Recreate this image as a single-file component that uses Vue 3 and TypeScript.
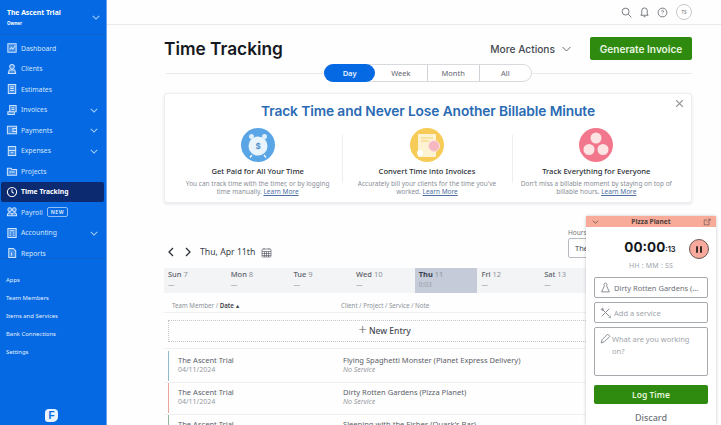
<script setup lang="ts">
interface NavItem { label: string; icon: string; chevron?: boolean; active?: boolean; badge?: string }
const nav: NavItem[] = [
  { label: 'Dashboard', icon: 'M2 2h9v9H2z M4 8l2-2 1.5 1.5L10 4' },
  { label: 'Clients', icon: 'M6.5 1.5a2.5 2.5 0 1 1 0 5 2.5 2.5 0 0 1 0-5z M3.5 7.5h6l1 4h-8z' },
  { label: 'Estimates', icon: 'M2.5 1.5h8v10h-8z M4.5 4h4 M4.5 6h4 M4.5 8h4' },
  { label: 'Invoices', icon: 'M4 1.5h7v7H4z M2 8.5h7v3H2z M6 4h3 M6 6h3', chevron: true },
  { label: 'Payments', icon: 'M1.5 2.5h10v8h-10z M7.5 5h4v3h-4z', chevron: true },
  { label: 'Expenses', icon: 'M2.5 1.5h8v10h-8z M2.5 6h8 M5 8.5h3', chevron: true },
  { label: 'Projects', icon: 'M1.5 3.5h4l1 1.5h5v6h-10z M3.5 7.5h6' },
  { label: 'Time Tracking', icon: 'M6.5 1.5a5 5 0 1 1 0 10 5 5 0 0 1 0-10z M6.5 3.5v3l2 1.5', active: true },
  { label: 'Payroll', icon: 'M4 2a2 2 0 1 1 0 4 2 2 0 0 1 0-4z M9 2a2 2 0 1 1 0 4 2 2 0 0 1 0-4z M1.5 10.5c0-4 4-4 5-1.5 1-2.500 5-2.500 5 1.500z', badge: 'NEW' },
  { label: 'Accounting', icon: 'M2 1.500h9v10H2z M4 4h5 M4 6.500h1.500 M7.500 6.500H9 M4 9h1.500 M7.500 9H9', chevron: true },
  { label: 'Reports', icon: 'M3 1.500h5l2.500 2.500v7.500H3z M6 6v3.500' },
]
const lower = ['Apps', 'Team Members', 'Items and Services', 'Bank Connections', 'Settings']
const tabs = ['Day', 'Week', 'Month', 'All']
const days = [
  { name: 'Sun', num: 7, total: '—' },
  { name: 'Mon', num: 8, total: '—' },
  { name: 'Tue', num: 9, total: '—' },
  { name: 'Wed', num: 10, total: '—' },
  { name: 'Thu', num: 11, total: '0:03', active: true },
  { name: 'Fri', num: 12, total: '—' },
  { name: 'Sat', num: 13, total: '—' },
]
const features = [
  { title: 'Get Paid for All Your Time', text: 'You can track time with the timer, or by logging time manually.', kind: 'clock' },
  { title: 'Convert Time into Invoices', text: "Accurately bill your clients for the time you've worked.", kind: 'doc' },
  { title: 'Track Everything for Everyone', text: "Don't miss a billable moment by staying on top of billable hours.", kind: 'team' },
]
const rows = [
  { who: 'The Ascent Trial', date: '04/11/2024', what: 'Flying Spaghetti Monster (Planet Express Delivery)', color: '#8fb8c9' },
  { who: 'The Ascent Trial', date: '04/11/2024', what: 'Dirty Rotten Gardens (Pizza Planet)', color: '#eba596' },
  { who: 'The Ascent Trial', date: '04/11/2024', what: 'Sleeping with the Fishes (Quark\'s Bar)', color: '#8fb89f' },
]
</script>

<template>
  <div class="app">
    <aside class="side">
      <div class="owner">
        <div>
          <div class="owner-name">The Ascent Trial</div>
          <div class="owner-role">Owner</div>
        </div>
        <svg class="chev" viewBox="0 0 10 6"><path d="M1 1l4 4 4-4" /></svg>
      </div>
      <nav class="nav">
        <div v-for="n in nav" :key="n.label" class="nav-item" :class="{ active: n.active }">
          <svg class="nav-ico" viewBox="0 0 13 13"><path :d="n.icon" /></svg>
          <span>{{ n.label }}</span>
          <span v-if="n.badge" class="badge">{{ n.badge }}</span>
          <svg v-if="n.chevron" class="chev item-chev" viewBox="0 0 10 6"><path d="M1 1l4 4 4-4" /></svg>
        </div>
      </nav>
      <div class="lower">
        <div v-for="l in lower" :key="l" class="lower-item">{{ l }}</div>
      </div>
      <div class="logo"><span>F</span></div>
    </aside>

    <main class="main">
      <header class="top">
        <svg class="top-ico" viewBox="0 0 12 12"><circle cx="5" cy="5" r="3.800" /><path d="M8 8l3.300 3.300" /></svg>
        <svg class="top-ico" viewBox="0 0 12 12"><path d="M6 1a3 3 0 0 1 3 3v3.500l1 1.500H2l1-1.500V4a3 3 0 0 1 3-3z M5 10.500h2" /></svg>
        <svg class="top-ico" viewBox="0 0 12 12"><circle cx="6" cy="6" r="4.800" /><path d="M4.800 4.800a1.200 1.200 0 1 1 1.800 1.100c-.4.2-.6.5-.6.900 M6 8.500v.3" /></svg>
        <div class="avatar">TS</div>
      </header>

      <div class="content">
        <div class="title-row">
          <h1>Time Tracking</h1>
          <div class="more">More Actions
            <svg viewBox="0 0 10 6"><path d="M1 1l4 4 4-4" /></svg>
          </div>
          <button class="generate">Generate Invoice</button>
        </div>

        <div class="tabs-wrap">
          <div class="tabs">
            <div v-for="(t, i) in tabs" :key="t" class="tab" :class="{ on: i === 0, sep: i === 1 || i === 2 }">{{ t }}</div>
          </div>
        </div>

        <section class="banner">
          <svg class="close" viewBox="0 0 8 8"><path d="M1 1l6 6M7 1L1 7" /></svg>
          <h2>Track Time and Never Lose Another Billable Minute</h2>
          <div class="features">
            <div v-for="f in features" :key="f.kind" class="feature">
              <svg class="feat-ico" viewBox="0 0 34 34">
                <template v-if="f.kind === 'clock'">
                  <circle cx="17" cy="17" r="17" fill="#5aa5e6" />
                  <circle cx="10.500" cy="8.500" r="2.500" fill="#dfeefb" />
                  <circle cx="23.500" cy="8.500" r="2.500" fill="#dfeefb" />
                  <path d="M11 27l-2 2.500M23 27l2 2.500" stroke="#eaf4fc" stroke-width="1.500" />
                  <circle cx="17" cy="18" r="9.500" fill="#eaf4fc" />
                  <text x="17" y="21" text-anchor="middle" class="dollar">$</text>
                </template>
                <template v-else-if="f.kind === 'doc'">
                  <circle cx="17" cy="17" r="17" fill="#f7cb58" />
                  <rect x="8" y="6" width="18" height="23" fill="#fdf3d2" />
                  <path d="M11 10h12M11 13h8" stroke="#f7dc8e" stroke-width="1.500" />
                  <circle cx="24" cy="18" r="5.500" fill="#f6b7c0" stroke="#fbe3e2" />
                  <circle cx="10" cy="25" r="3" fill="#fff" />
                </template>
                <template v-else>
                  <circle cx="17" cy="17" r="17" fill="#f2778c" />
                  <circle cx="17" cy="10" r="5.500" fill="#fde4e4" />
                  <circle cx="10" cy="21.500" r="5.500" fill="#fde4e4" />
                  <circle cx="24" cy="21.500" r="5.500" fill="#fde4e4" />
                </template>
              </svg>
              <h3>{{ f.title }}</h3>
              <p>{{ f.text }} <a>Learn More</a></p>
            </div>
          </div>
        </section>

        <div class="date-row">
          <svg class="arrow" viewBox="0 0 6 10"><path d="M5 1L1 5l4 4" /></svg>
          <svg class="arrow next" viewBox="0 0 6 10"><path d="M1 1l4 4-4 4" /></svg>
          <span class="date">Thu, Apr 11th</span>
          <svg class="cal" viewBox="0 0 11 11"><rect x="1" y="2" width="9" height="8" rx="1" /><path d="M1 4.500h9M1 6.500h9M1 8.500h9M3.500 4.500V10M5.500 4.500V10M7.500 4.500V10M3 1v1.500M8 1v1.500" /></svg>
          <div class="hours">
            <div class="hours-label">Hours</div>
            <div class="hours-box">The Ascent Trial</div>
          </div>
        </div>

        <div class="week">
          <div v-for="d in days" :key="d.name" class="day" :class="{ on: d.active }">
            <div><b>{{ d.name }}</b> {{ d.num }}</div>
            <div class="total">{{ d.total }}</div>
          </div>
        </div>

        <div class="thead">
          <div class="c1">Team Member / <b>Date ▴</b></div>
          <div>Client / Project / Service / Note</div>
        </div>

        <div class="new-entry"><span class="plus">+</span> New Entry</div>

        <div class="rows">
          <div v-for="(r, i) in rows" :key="i" class="row">
            <div class="cell" :style="{ borderLeftColor: r.color }">
              <div class="who">{{ r.who }}</div>
              <div class="sub">{{ r.date }}</div>
            </div>
            <div class="cell-2">
              <div class="who">{{ r.what }}</div>
              <div class="sub"><i>No Service</i></div>
            </div>
          </div>
        </div>
      </div>
    </main>

    <aside class="timer">
      <div class="timer-head">
        <svg class="th-chev" viewBox="0 0 10 6"><path d="M1 1l4 4 4-4" /></svg>
        <span>Pizza Planet</span>
        <svg class="th-open" viewBox="0 0 10 10"><path d="M1.500 2.500h4M1.500 2.500v6h6v-4M5 5.500L9 1.500M6.500 1.500H9V4" /></svg>
      </div>
      <div class="timer-body">
        <div class="clock-row">
          <div class="clock">00:00<small>:13</small></div>
          <button class="pause"><i></i><i></i></button>
        </div>
        <div class="hms">HH : MM : SS</div>
        <div class="field">
          <svg viewBox="0 0 10 10"><path d="M5 1a1.500 1.500 0 0 1 1 2.500L8.500 9h-7L4 3.500A1.500 1.500 0 0 1 5 1z" /></svg>
          <span class="dark">Dirty Rotten Gardens (...</span>
        </div>
        <div class="field">
          <svg viewBox="0 0 10 10"><path d="M1.500 1.500l7 7M8.500 1.500l-7 7M2 1a1 1 0 1 1-1 1M8 9a1 1 0 1 0 1-1" /></svg>
          <span>Add a service</span>
        </div>
        <div class="field area">
          <svg viewBox="0 0 10 10"><path d="M1 9l1-3 5-5 2 2-5 5z" /></svg>
          <span>What are you working on?</span>
        </div>
        <button class="log">Log Time</button>
        <div class="discard">Discard</div>
      </div>
    </aside>
  </div>
</template>

<style>
html, body { margin: 0; overflow: hidden; background: #fff; }
</style>

<style scoped>
.app {
  position: relative;
  display: flex;
  width: 721px;
  height: 425px;
  overflow: hidden;
  font-family: "Noto Sans", "Liberation Sans", sans-serif;
  color: #3a3f48;
  background: #fefefe;
}
.side {
  position: relative;
  flex: 0 0 107px;
  height: 425px;
  background: #0469e2;
  color: #e4f0ff;
  border-right: 1px solid #5da2ee;
  box-sizing: border-box;
}
.owner {
  height: 35px;
  display: flex;
  align-items: center;
  justify-content: space-between;
  padding: 0 6px 0 7px;
  box-sizing: border-box;
  border-bottom: 1px solid #0f62c9;
}
.owner-name { font-size: 6.800px; font-weight: 700; color: #fff; line-height: 9px; margin-top: 1px; }
.owner-role { font-size: 4.500px; font-weight: 700; color: #fff; line-height: 8px; margin-top: 2px; }
.chev { width: 8px; height: 5px; fill: none; stroke: #a8d0fb; stroke-width: 1.300; }
.nav { padding: 3px 2px 3px 1px; border-bottom: 1px solid #0f62c9; height: 224px; box-sizing: border-box; }
.nav-item {
  height: 20.500px;
  display: flex;
  align-items: center;
  padding-left: 5px;
  font-size: 6.800px;
  color: #d5e6fc;
  position: relative;
}
.nav-ico { width: 12px; height: 12px; margin-right: 3px; fill: rgba(255,255,255,.25); stroke: #cfe4fd; stroke-width: 1.100; flex: none; }
.item-chev { position: absolute; right: 6px; top: 8px; }
.nav-item.active { background: #0b2a70; border-radius: 2px; color: #fff; font-weight: 700; }
.nav-item.active .nav-ico { fill: none; stroke: #fff; }
.badge {
  margin-left: 4px;
  border: 1px solid #8cbdf5;
  border-radius: 2px;
  font-size: 5px;
  font-weight: 700;
  letter-spacing: .6px;
  padding: 1px 3px;
  line-height: 6px;
}
.lower { padding-top: 12px; }
.lower-item { height: 18px; line-height: 18px; padding-left: 6px; font-size: 5.900px; color: #e4f0ff; }
.logo {
  position: absolute;
  left: 45px;
  bottom: 3px;
  width: 13px;
  height: 13px;
  background: #eaf4ff;
  border-radius: 4px 4px 5px 3px;
  display: flex;
  align-items: center;
  justify-content: center;
  color: #0469e2;
  font: 800 10px "Liberation Sans", sans-serif;
}
.main { flex: 1; min-width: 0; display: flex; flex-direction: column; }
.top {
  flex: none;
  height: 25px;
  box-sizing: border-box;
  border-bottom: 1px solid #e9eaec;
  display: flex;
  align-items: center;
  justify-content: flex-end;
  padding-right: 29px;
  gap: 7px;
}
.top-ico { width: 11px; height: 11px; fill: none; stroke: #6d7178; stroke-width: 1; }
.avatar {
  width: 16px;
  height: 16px;
  border: 1px solid #c7c9cc;
  border-radius: 50%;
  box-sizing: border-box;
  font-size: 4.500px;
  text-align: center;
  line-height: 14px;
  color: #666;
  margin-left: 1px;
}
.content { padding: 0 29px 0 57px; flex: none; }
.title-row { display: flex; align-items: center; height: 23px; margin-top: 12px; }
h1 { margin: 0; font: 600 17.300px Inter, sans-serif; color: #15191f; flex: 1; }
.more { font: 500 10.200px Inter, sans-serif; color: #454a52; display: flex; align-items: center; gap: 6px; margin-right: 18px; }
.more svg { width: 11px; height: 6px; fill: none; stroke: #6a6f75; stroke-width: 1; }
.generate {
  width: 102px;
  height: 23px;
  border: 0;
  border-radius: 2px;
  background: #2f8a10;
  color: #e9f7e0;
  font: 600 10.100px Inter, sans-serif;
  padding: 0;
}
.tabs-wrap {
  position: relative;
  height: 18px;
  margin-top: 4px;
  margin-left: 2px;
  display: flex;
  justify-content: center;
  background: linear-gradient(#e9eaec, #e9eaec) center / 100% 1px no-repeat;
}
.tabs {
  display: flex;
  width: 208px;
  height: 18px;
  margin-left: -2px;
  border: 1px solid #d8dade;
  border-radius: 9px;
  box-sizing: border-box;
  background: #fff;
}
.tab { width: 51px; text-align: center; font-size: 7.500px; line-height: 16px; color: #5f6570; flex: 1; }
.tab.on { background: #0469e2; color: #e8f2ff; border-radius: 9px; font-weight: 600; margin: -1px 0 -1px -1px; line-height: 18px; }
.tab.sep { border-right: 1px solid #cfd2d6; }
.banner {
  position: relative;
  margin-top: 11px;
  height: 110px;
  box-sizing: border-box;
  border: 1px solid #eceef1;
  border-radius: 3px;
  box-shadow: 0 1px 3px rgba(40,50,70,.12);
  background: #fff;
}
.close { position: absolute; right: 7px; top: 5px; width: 9px; height: 9px; fill: none; stroke: #8f959b; stroke-width: 1.100; }
h2 {
  margin: 0;
  padding-top: 8px;
  text-align: center;
  font: 600 13.750px/18px Inter, sans-serif;
  color: #2a6bb3;
  letter-spacing: -.1px;
}
.features { display: flex; margin: 8px 10px 0 8px; }
.feature {
  flex: 1;
  text-align: center;
  display: flex;
  flex-direction: column;
  align-items: center;
  min-width: 0;
  position: relative;
}
.feature + .feature::before {
  content: "";
  position: absolute;
  left: 0;
  top: 7px;
  height: 48px;
  width: 1px;
  background: #eceef1;
}
.feat-ico { width: 34px; height: 34px; }
.dollar { font: 700 8px Inter, sans-serif; fill: #4e8fc8; }
h3 { margin: 4px 0 0; font: 500 7.600px/11px "Noto Sans", sans-serif; color: #2a2e35; white-space: nowrap; }
.feature p { margin: 3px 0 0; font-size: 6.500px; line-height: 8px; color: #8a8f98; width: 152px; }
.feature a { color: #4f6f9f; text-decoration: underline; }
.date-row { display: flex; align-items: center; height: 34px; margin-top: 32px; position: relative; }
.arrow { width: 6px; height: 10px; fill: none; stroke: #2c3037; stroke-width: 1.300; margin-left: 4px; }
.arrow.next { margin-left: 11px; }
.date { margin-left: 9px; font-size: 8.700px; color: #3a3f48; }
.cal { margin-left: 6px; width: 11px; height: 11px; fill: none; stroke: #5e636b; stroke-width: .7; }
.hours { position: absolute; left: 404px; top: -6px; }
.hours-label { font-size: 6.500px; color: #777; line-height: 8px; }
.hours-box {
  width: 110px;
  height: 20px;
  margin-top: 1px;
  box-sizing: border-box;
  border: 1px solid #b8bcc2;
  border-radius: 2px;
  font-size: 7.500px;
  line-height: 18px;
  padding-left: 6px;
}
.week { display: flex; background: #f3f4f6; height: 25px; margin-top: -1px; }
.day { width: 62.700px; flex: none; box-sizing: border-box; padding: 2px 0 0 4px; font-size: 7.500px; line-height: 9px; color: #8d929a; }
.day b { font-weight: 500; color: #5b606a; }
.day.on { background: #c5cbd9; }
.day.on b { font-weight: 700; color: #39404d; }
.total { font-size: 6.500px; line-height: 10px; margin-top: 1px; color: #9aa0a8; }
.thead {
  display: flex;
  height: 20px;
  padding-top: 6px;
  box-sizing: border-box;
  align-items: center;
  font-size: 6.200px;
  color: #8d929a;
  border-bottom: 1px solid #eff0f2;
}
.thead b { color: #3e434c; font-weight: 600; }
.c1 { width: 177px; padding-left: 8px; box-sizing: border-box; }
.new-entry {
  margin: 7px 0 0 4px;
  height: 22px;
  box-sizing: border-box;
  border: 1px dotted #c3c6ca;
  text-align: center;
  font: 500 8.500px/19px "Noto Sans", sans-serif;
  color: #454a52;
  padding-right: 91px;
}
.plus { font-size: 15px; font-weight: 300; line-height: 15px; vertical-align: -1px; color: #666; }
.rows { margin-top: 6px; border-top: 1px solid #eff0f2; padding-top: 2px; }
.row { display: flex; height: 32px; border-bottom: 1px solid #eff0f2; box-sizing: border-box; }
.cell { border-left: 1px solid; margin: 0 0 1px 4px; padding: 4px 0 0 9px; width: 175px; box-sizing: border-box; }
.cell-2 { padding-top: 4px; }
.who { font-size: 7.550px; line-height: 10px; color: #5c616a; }
.sub { font-size: 7px; line-height: 10px; color: #969aa1; }
.timer {
  position: absolute;
  left: 586px;
  top: 216px;
  width: 130px;
  height: 209px;
  background: #fff;
  box-shadow: 0 0 3px rgba(30,40,60,.3);
  border-radius: 2px 2px 0 0;
}
.timer-head {
  height: 11px;
  background: #f9ab9a;
  display: flex;
  align-items: center;
  justify-content: center;
  font-size: 6.600px;
  font-weight: 700;
  color: #4f3f3b;
  position: relative;
}
.th-chev { position: absolute; left: 6px; top: 4px; width: 7px; height: 4px; fill: none; stroke: #5b4540; stroke-width: 1.100; }
.th-open { position: absolute; right: 5px; top: 2px; width: 8px; height: 8px; fill: none; stroke: #6b5650; stroke-width: .9; }
.timer-body { padding: 0 8px; }
.clock-row { position: relative; height: 28px; padding-top: 10px; display: flex; justify-content: center; }
.clock { font: 700 13.500px/20px Inter, sans-serif; color: #16191e; margin-right: 2px; }
.clock small { font-size: 7.500px; font-weight: 600; }
.pause {
  position: absolute;
  right: -1px;
  top: 12px;
  width: 20px;
  height: 20px;
  border: 1px solid #6a5753;
  border-radius: 50%;
  background: #f6a99c;
  display: flex;
  align-items: center;
  justify-content: center;
  gap: 2px;
  padding: 0;
}
.pause i { width: 2px; height: 7px; background: #3a2c29; border-radius: 1px; }
.hms { text-align: center; font-size: 7px; color: #a3a7ad; line-height: 10px; margin-top: -4px; margin-bottom: 6px; letter-spacing: .2px; }
.field {
  height: 21px;
  margin-bottom: 4px;
  border: 1px solid #a6a9ae;
  border-radius: 2px;
  box-sizing: border-box;
  display: flex;
  align-items: center;
  font-size: 7.500px;
  color: #a0a4aa;
  padding-left: 5px;
  gap: 3px;
}
.field svg { width: 11px; height: 11px; flex: none; fill: none; stroke: #8b8f95; stroke-width: .9; }
.field .dark { color: #6d7178; white-space: nowrap; }
.field.area { height: 49px; align-items: flex-start; padding: 5px 8px 0 5px; gap: 1px; line-height: 12px; margin-bottom: 9px; }
.log {
  display: block;
  width: 100%;
  height: 19px;
  border: 0;
  border-radius: 2px;
  background: #2f8a10;
  color: #e4f5d8;
  font: 600 8.500px "Noto Sans", sans-serif;
  padding: 0;
}
.discard { text-align: center; font-size: 9px; font-weight: 500; color: #6f7379; margin-top: 8px; line-height: 11px; }
</style>
